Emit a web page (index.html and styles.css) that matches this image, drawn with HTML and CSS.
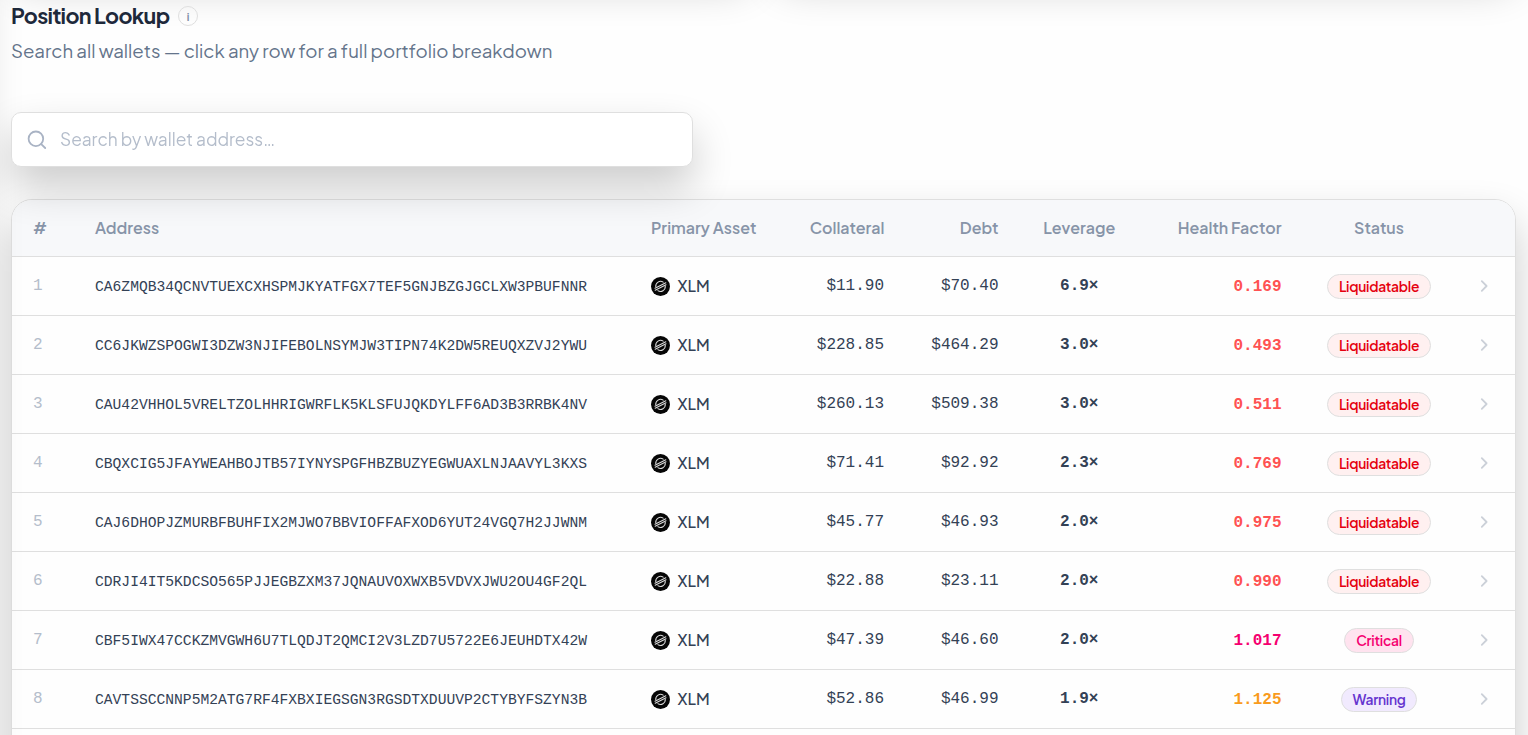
FILE: index.html
```html
<!DOCTYPE html>
<html lang="en">
<head>
    <meta charset="UTF-8">
    <meta name="viewport" content="width=device-width, initial-scale=1.0">
    <title>Position Lookup</title>
    <link rel="stylesheet" href="styles.css">
</head>
<body>
    <svg width="0" height="0" class="sprite" aria-hidden="true">
        <symbol id="xlm" viewBox="0 0 20 20">
            <circle cx="10" cy="10" r="10" fill="#060606"/>
            <g fill="none" stroke="#dcdcdc" stroke-width="1.1" stroke-linecap="round">
                <path d="M5 10.2A5.1 5.1 0 0 1 12.8 5.4"/>
                <path d="M15 9.6A5.1 5.1 0 0 1 7.2 14.4"/>
                <path d="M4.2 11.9L15.6 6.1"/>
                <path d="M4.4 13.9L15.8 8.1"/>
            </g>
        </symbol>
        <symbol id="chevron" viewBox="0 0 16 16">
            <path d="M5.8 3.2L10.6 8L5.8 12.8" fill="none" stroke="#cbd0d8" stroke-width="1.8" stroke-linecap="round" stroke-linejoin="round"/>
        </symbol>
    </svg>

    <aside class="sidebar"></aside>

    <main class="page">
        <div class="summary">
            <div class="card"></div>
            <div class="card"></div>
        </div>

        <header class="heading">
            <h1>Position Lookup</h1>
            <span class="info">i</span>
        </header>
        <p class="subtitle">Search all wallets — click any row for a full portfolio breakdown</p>

        <label class="search">
            <svg class="search-icon" width="20" height="20" viewBox="0 0 20 20" fill="none" stroke="#a9b3c4" stroke-width="1.8" stroke-linecap="round">
                <circle cx="8.9" cy="8.8" r="7.3"/>
                <path d="M14.2 14.1L18.2 18"/>
            </svg>
            <input type="text" placeholder="Search by wallet address…">
        </label>

        <div class="table-card">
            <table>
                <colgroup>
                    <col class="c-num"><col class="c-address"><col class="c-asset"><col class="c-collateral"><col class="c-debt"><col class="c-leverage"><col class="c-health"><col class="c-status"><col class="c-arrow">
                </colgroup>
                <thead>
                    <tr>
                        <th class="hash">#</th>
                        <th>Address</th>
                        <th>Primary Asset</th>
                        <th class="right">Collateral</th>
                        <th class="right">Debt</th>
                        <th class="center lev">Leverage</th>
                        <th class="right">Health Factor</th>
                        <th class="center">Status</th>
                        <th></th>
                    </tr>
                </thead>
                <tbody>
                    <tr>
                        <td class="num">1</td>
                        <td class="address">CA6ZMQB34QCNVTUEXCXHSPMJKYATFGX7TEF5GNJBZGJGCLXW3PBUFNNR</td>
                        <td><div class="asset"><svg width="19" height="19"><use href="#xlm"/></svg><span>XLM</span></div></td>
                        <td class="money collateral">$11.90</td>
                        <td class="money">$70.40</td>
                        <td class="leverage">6.9×</td>
                        <td class="health danger">0.169</td>
                        <td class="center"><span class="badge liquidatable">Liquidatable</span></td>
                        <td class="arrow"><svg width="16" height="16"><use href="#chevron"/></svg></td>
                    </tr>
                    <tr>
                        <td class="num">2</td>
                        <td class="address">CC6JKWZSPOGWI3DZW3NJIFEBOLNSYMJW3TIPN74K2DW5REUQXZVJ2YWU</td>
                        <td><div class="asset"><svg width="19" height="19"><use href="#xlm"/></svg><span>XLM</span></div></td>
                        <td class="money collateral">$228.85</td>
                        <td class="money">$464.29</td>
                        <td class="leverage">3.0×</td>
                        <td class="health danger">0.493</td>
                        <td class="center"><span class="badge liquidatable">Liquidatable</span></td>
                        <td class="arrow"><svg width="16" height="16"><use href="#chevron"/></svg></td>
                    </tr>
                    <tr>
                        <td class="num">3</td>
                        <td class="address">CAU42VHHOL5VRELTZOLHHRIGWRFLK5KLSFUJQKDYLFF6AD3B3RRBK4NV</td>
                        <td><div class="asset"><svg width="19" height="19"><use href="#xlm"/></svg><span>XLM</span></div></td>
                        <td class="money collateral">$260.13</td>
                        <td class="money">$509.38</td>
                        <td class="leverage">3.0×</td>
                        <td class="health danger">0.511</td>
                        <td class="center"><span class="badge liquidatable">Liquidatable</span></td>
                        <td class="arrow"><svg width="16" height="16"><use href="#chevron"/></svg></td>
                    </tr>
                    <tr>
                        <td class="num">4</td>
                        <td class="address">CBQXCIG5JFAYWEAHBOJTB57IYNYSPGFHBZBUZYEGWUAXLNJAAVYL3KXS</td>
                        <td><div class="asset"><svg width="19" height="19"><use href="#xlm"/></svg><span>XLM</span></div></td>
                        <td class="money collateral">$71.41</td>
                        <td class="money">$92.92</td>
                        <td class="leverage">2.3×</td>
                        <td class="health danger">0.769</td>
                        <td class="center"><span class="badge liquidatable">Liquidatable</span></td>
                        <td class="arrow"><svg width="16" height="16"><use href="#chevron"/></svg></td>
                    </tr>
                    <tr>
                        <td class="num">5</td>
                        <td class="address">CAJ6DHOPJZMURBFBUHFIX2MJWO7BBVIOFFAFXOD6YUT24VGQ7H2JJWNM</td>
                        <td><div class="asset"><svg width="19" height="19"><use href="#xlm"/></svg><span>XLM</span></div></td>
                        <td class="money collateral">$45.77</td>
                        <td class="money">$46.93</td>
                        <td class="leverage">2.0×</td>
                        <td class="health danger">0.975</td>
                        <td class="center"><span class="badge liquidatable">Liquidatable</span></td>
                        <td class="arrow"><svg width="16" height="16"><use href="#chevron"/></svg></td>
                    </tr>
                    <tr>
                        <td class="num">6</td>
                        <td class="address">CDRJI4IT5KDCSO565PJJEGBZXM37JQNAUVOXWXB5VDVXJWU2OU4GF2QL</td>
                        <td><div class="asset"><svg width="19" height="19"><use href="#xlm"/></svg><span>XLM</span></div></td>
                        <td class="money collateral">$22.88</td>
                        <td class="money">$23.11</td>
                        <td class="leverage">2.0×</td>
                        <td class="health danger">0.990</td>
                        <td class="center"><span class="badge liquidatable">Liquidatable</span></td>
                        <td class="arrow"><svg width="16" height="16"><use href="#chevron"/></svg></td>
                    </tr>
                    <tr>
                        <td class="num">7</td>
                        <td class="address">CBF5IWX47CCKZMVGWH6U7TLQDJT2QMCI2V3LZD7U5722E6JEUHDTX42W</td>
                        <td><div class="asset"><svg width="19" height="19"><use href="#xlm"/></svg><span>XLM</span></div></td>
                        <td class="money collateral">$47.39</td>
                        <td class="money">$46.60</td>
                        <td class="leverage">2.0×</td>
                        <td class="health pink">1.017</td>
                        <td class="center"><span class="badge critical">Critical</span></td>
                        <td class="arrow"><svg width="16" height="16"><use href="#chevron"/></svg></td>
                    </tr>
                    <tr>
                        <td class="num">8</td>
                        <td class="address">CAVTSSCCNNP5M2ATG7RF4FXBXIEGSGN3RGSDTXDUUVP2CTYBYFSZYN3B</td>
                        <td><div class="asset"><svg width="19" height="19"><use href="#xlm"/></svg><span>XLM</span></div></td>
                        <td class="money collateral">$52.86</td>
                        <td class="money">$46.99</td>
                        <td class="leverage">1.9×</td>
                        <td class="health orange">1.125</td>
                        <td class="center"><span class="badge warning">Warning</span></td>
                        <td class="arrow"><svg width="16" height="16"><use href="#chevron"/></svg></td>
                    </tr>
                </tbody>
            </table>
        </div>
    </main>
</body>
</html>
```
FILE: styles.css
```css
* {
    box-sizing: border-box;
}
body {
    margin: 0;
    background: #fefefe;
    color: #334155;
    font-family: "Plus Jakarta Sans", Inter, sans-serif;
}
.sprite {
    position: absolute;
}
.sidebar {
    position: fixed;
    top: -40px;
    bottom: -40px;
    left: -220px;
    width: 200px;
    box-shadow: 0 20px 40px rgba(0, 0, 0, 0.2);
}
.page {
    height: 735px;
    padding: 0 12px 0 11px;
    overflow: hidden;
}
.summary {
    display: grid;
    grid-template-columns: 1fr 1fr;
    gap: 24px;
    margin-top: -233px;
    margin-bottom: 33px;
}
.card {
    height: 200px;
    border-radius: 20px;
    box-shadow: 0 20px 40px rgba(0, 0, 0, 0.2);
}
.heading {
    display: flex;
    align-items: center;
    gap: 9px;
    height: 32px;
}
h1 {
    margin: 0;
    padding-bottom: 2px;
    width: 158px;
    color: #1e293b;
    font-size: 21.5px;
    font-weight: 700;
    letter-spacing: -0.65px;
    white-space: nowrap;
}
.info {
    display: flex;
    align-items: center;
    justify-content: center;
    width: 20px;
    height: 20px;
    border: 1px solid #dfdfdf;
    border-radius: 50%;
    color: #8290a6;
    font-size: 10.5px;
    font-weight: 700;
}
.subtitle {
    margin: 4px 0 47px;
    color: #64748b;
    font-size: 18.65px;
    line-height: 29px;
    white-space: nowrap;
}
.search {
    position: relative;
    display: flex;
    align-items: center;
    gap: 13px;
    width: 682px;
    height: 55px;
    padding: 0 15px;
    border: 1px solid #dfdfdf;
    border-radius: 10px;
    background: #fff;
    box-shadow: 0 20px 40px rgba(0, 0, 0, 0.2);
}
.search input {
    flex: 1;
    padding: 0 0 2px;
    border: 0;
    outline: 0;
    background: none;
    font: 400 17.33px "Plus Jakarta Sans", Inter, sans-serif;
}
.search input::placeholder {
    color: #b4bdcb;
}
.table-card {
    margin-top: 32px;
    height: 900px;
    overflow: hidden;
    border: 1px solid #dfdfdf;
    border-radius: 21px;
    box-shadow: 0 20px 40px rgba(0, 0, 0, 0.2);
}
table {
    width: 1503px;
    table-layout: fixed;
    border-collapse: separate;
    border-spacing: 0;
}
.c-num { width: 61px; }
.c-address { width: 556px; }
.c-asset { width: 149px; }
.c-collateral { width: 128px; }
.c-debt { width: 114px; }
.c-leverage { width: 117px; }
.c-health { width: 166px; }
.c-status { width: 152px; }
.c-arrow { width: 60px; }
th {
    height: 57px;
    padding: 0 21.5px 2px 22px;
    background: #f7f8fa;
    border-bottom: 1px solid #dfdfdf;
    color: #8794a8;
    font-size: 16px;
    font-weight: 600;
    text-align: left;
    white-space: nowrap;
}
td {
    height: 59px;
    padding: 0 21.5px 0 22px;
    background: #fefefe;
    border-bottom: 1px solid #dfdfdf;
    white-space: nowrap;
}
.hash {
    padding-left: 21px;
}
.right {
    text-align: right;
}
.center {
    text-align: center;
}
th.center {
    padding: 0 0 2px;
}
td.center {
    padding: 0;
}
.num,
.address,
.money,
.leverage,
.health {
    padding-top: 2px;
    font-family: "Liberation Mono", monospace;
    font-size: 16px;
}
.num,
.money,
.leverage {
    padding-top: 0;
}
.num {
    padding-left: 21px;
    color: #b4bdcb;
}
.address {
    font-size: 14.65px;
}
.asset {
    display: flex;
    align-items: center;
    gap: 7.5px;
    font-size: 16px;
    font-weight: 500;
}
.asset span {
    padding-bottom: 1px;
}
.money {
    text-align: right;
}
.collateral {
    padding-right: 22px;
}
.leverage,
th.lev {
    padding-left: 1.5px;
    padding-right: 0;
}
.leverage {
    text-align: center;
    font-weight: 700;
}
.health {
    text-align: right;
    font-weight: 700;
}
.danger { color: #ff5252; }
.pink { color: #f50070; }
.orange { color: #f99b1c; }
.badge {
    display: inline-flex;
    align-items: center;
    justify-content: center;
    height: 25px;
    border: 1px solid #dfdfdf;
    border-radius: 13px;
    font-size: 13.8px;
    font-weight: 600;
    letter-spacing: -0.25px;
    vertical-align: middle;
}
.liquidatable {
    width: 104px;
    background: #fff0f0;
    color: #e5000f;
}
.critical {
    width: 70px;
    background: #ffe3ef;
    color: #f50070;
}
.warning {
    width: 76px;
    background: #f1eafe;
    color: #6534cf;
}
.arrow {
    padding: 0 21px;
}
.arrow svg {
    display: block;
}
```
